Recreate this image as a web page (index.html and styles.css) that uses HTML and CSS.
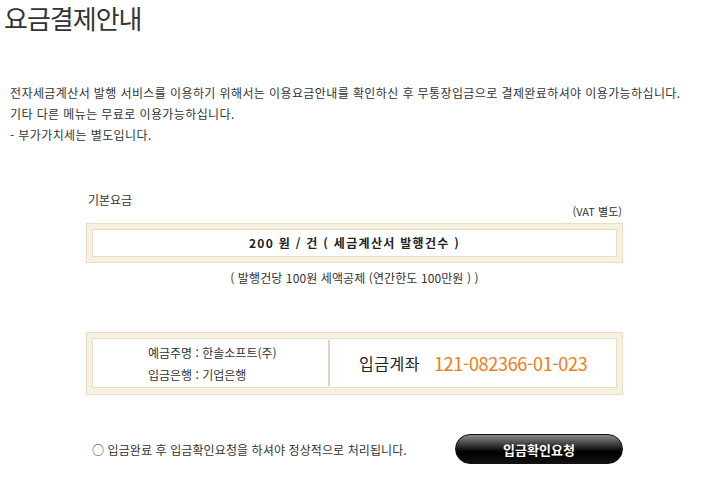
FILE: index.html
```html
<!DOCTYPE html>
<html lang="ko">
<head>
    <meta charset="UTF-8">
    <title>요금결제안내</title>
    <link rel="stylesheet" href="styles.css">
</head>
<body>
    <div class="page">
        <h1>요금결제안내</h1>

        <div class="intro">
            <p>전자세금계산서 발행 서비스를 이용하기 위해서는 이용요금안내를 확인하신 후 무통장입금으로 결제완료하셔야 이용가능하십니다.</p>
            <p>기타 다른 메뉴는 무료로 이용가능하십니다.</p>
            <p>- 부가가치세는 별도입니다.</p>
        </div>

        <div class="section">
            <div class="fee-head">
                <span class="fee-title">기본요금</span>
                <span class="fee-vat">(VAT 별도)</span>
            </div>
            <div class="frame">
                <div class="frame-inner fee-box">200 원 / 건 ( 세금계산서 발행건수 )</div>
            </div>
            <p class="fee-note">( 발행건당 100원 세액공제 (연간한도 100만원 ) )</p>

            <div class="frame account-frame">
                <div class="frame-inner account">
                    <div class="account-info">
                        <p>예금주명 : 한솔소프트(주)</p>
                        <p>입금은행 : 기업은행</p>
                    </div>
                    <div class="account-number">
                        <span class="label">입금계좌</span>
                        <span class="number">121-082366-01-023</span>
                    </div>
                </div>
            </div>

            <div class="confirm">
                <p>○ 입금완료 후 입금확인요청을 하셔야 정상적으로 처리됩니다.</p>
                <button class="confirm-btn" type="button">입금확인요청</button>
            </div>
        </div>
    </div>
</body>
</html>
```

FILE: styles.css
```css
body {
    margin: 0;
    background: #fff;
    color: #333;
    font-family: "Noto Sans CJK KR", "Noto Sans", sans-serif;
}
.page {
    width: 719px;
    padding-top: 1px;
}
h1 {
    margin: 0;
    padding: 0 0 0 4px;
    font-size: 26px;
    font-weight: normal;
    line-height: 33px;
    color: #333;
    letter-spacing: -1px;
}
.intro {
    padding: 48px 0 0 10px;
}
.intro p {
    margin: 0;
    font-size: 12px;
    line-height: 21px;
    letter-spacing: 0.4px;
}
.section {
    width: 537px;
    margin: 44px 0 0 86px;
}
.fee-head {
    display: flex;
    justify-content: space-between;
    height: 34px;
}
.fee-title {
    font-size: 12px;
    line-height: 18px;
    padding-left: 2px;
    margin-top: 2px;
}
.fee-vat {
    font-size: 11px;
    line-height: 14px;
    margin-top: 15px;
    padding-right: 1px;
}
.frame {
    background: #f5f0e1;
    border: 1px solid #e8dfc3;
    padding: 5px;
}
.frame-inner {
    background: #fff;
    border: 1px solid #e8dfc3;
}
.fee-box {
    height: 26px;
    line-height: 26px;
    text-align: center;
    font-size: 12px;
    font-weight: bold;
    color: #222;
    letter-spacing: 1.3px;
}
.fee-note {
    margin: 5px 0 0;
    font-size: 12px;
    line-height: 20px;
    text-align: center;
    letter-spacing: 0.1px;
}
.account-frame {
    margin-top: 44px;
    padding: 5px 5px 6px;
}
.account {
    display: flex;
    align-items: center;
    height: 48px;
}
.account-info {
    width: 237px;
    box-sizing: border-box;
    padding-left: 55px;
    padding-top: 2px;
    border-right: 2px solid #e8d0bd;
}
.account-info p {
    margin: 0;
    font-size: 12px;
    line-height: 22px;
}
.account-number {
    padding-left: 29px;
    display: flex;
    align-items: center;
    gap: 14px;
}
.account-number .label {
    font-size: 16px;
    color: #222;
    letter-spacing: 0.5px;
}
.account-number .number {
    font-size: 18px;
    color: #f07c14;
    letter-spacing: -0.3px;
}
.confirm {
    display: flex;
    justify-content: space-between;
    align-items: center;
    margin-top: 39px;
    padding-left: 6px;
}
.confirm p {
    margin: 0;
    font-size: 12px;
    letter-spacing: 0.1px;
}
.confirm-btn {
    width: 168px;
    height: 30px;
    border: 1px solid #111;
    border-radius: 15px;
    background: linear-gradient(#8a8a8a 0%, #3a3a3a 35%, #000 60%, #111 100%);
    color: #fff;
    font-family: inherit;
    font-size: 13px;
    font-weight: bold;
    cursor: pointer;
}
```
